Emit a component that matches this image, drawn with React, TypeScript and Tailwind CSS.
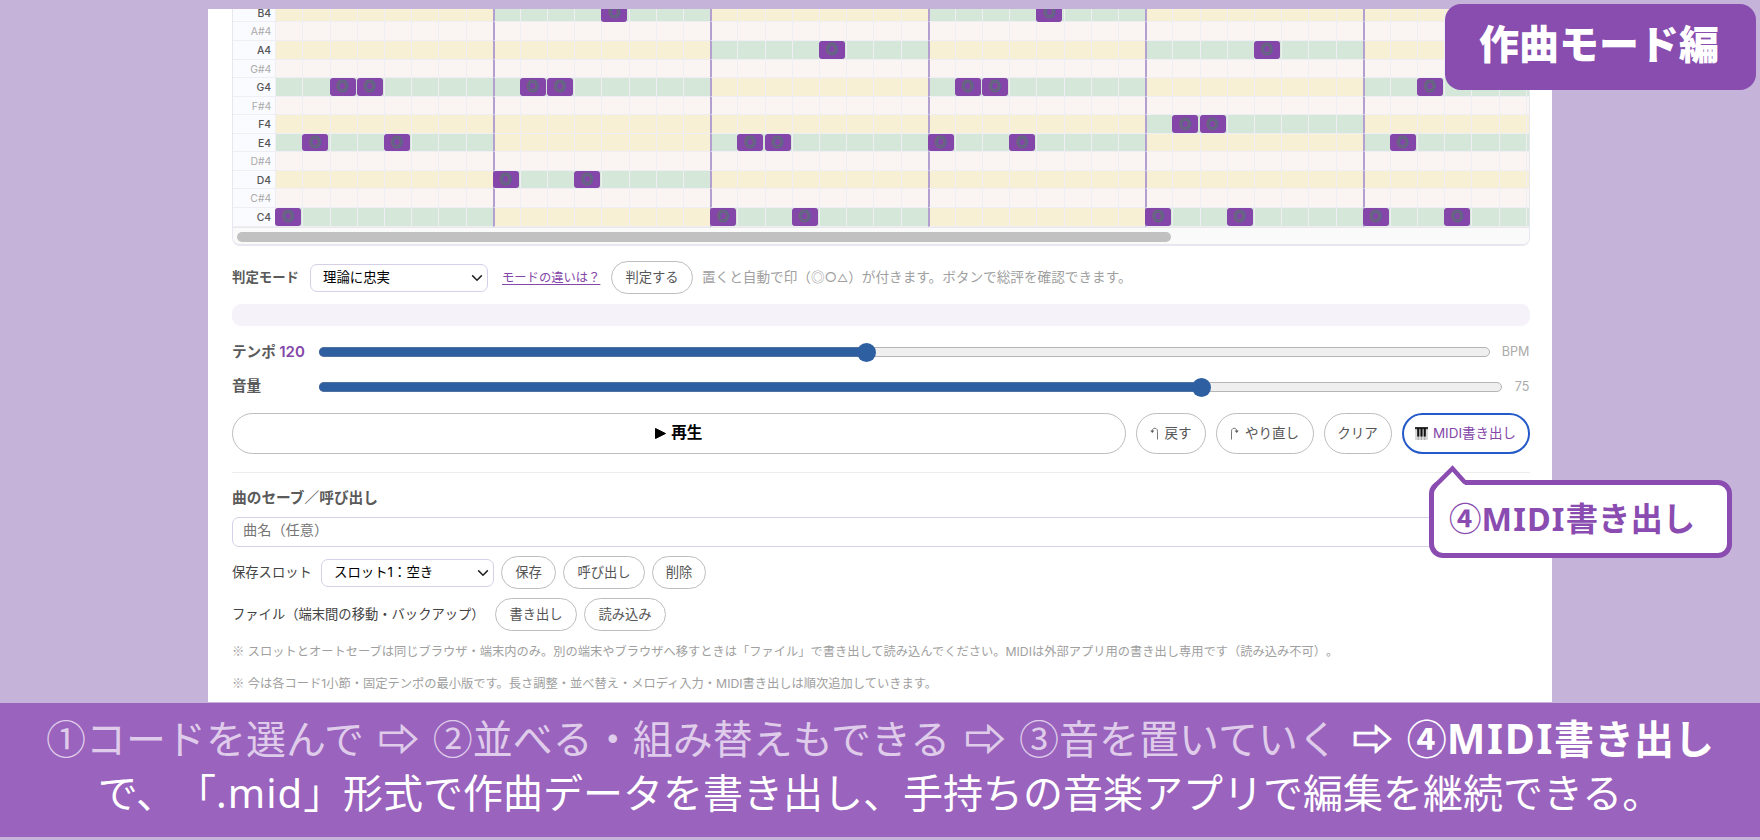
import React from "react";

type Row = { name: string; sharp?: boolean; green: number[]; notes: number[] };

const ROWS: Row[] = [
  { name: "B4", green: [1, 3], notes: [12, 28] },
  { name: "A#4", sharp: true, green: [], notes: [] },
  { name: "A4", green: [2, 4], notes: [20, 36] },
  { name: "G#4", sharp: true, green: [], notes: [] },
  { name: "G4", green: [0, 1, 3, 5], notes: [2, 3, 9, 10, 25, 26, 42] },
  { name: "F#4", sharp: true, green: [], notes: [] },
  { name: "F4", green: [4], notes: [33, 34] },
  { name: "E4", green: [0, 2, 3, 5], notes: [1, 4, 17, 18, 24, 27, 41] },
  { name: "D#4", sharp: true, green: [], notes: [] },
  { name: "D4", green: [1], notes: [8, 11] },
  { name: "C#4", sharp: true, green: [], notes: [] },
  { name: "C4", green: [0, 2, 4, 5], notes: [0, 16, 19, 32, 35, 40, 43] },
];

const COLS = Array.from({ length: 48 }, (_, i) => i);

function Cell({ row, col }: { row: Row; col: number }) {
  const bar = Math.floor(col / 8);
  const bg = row.sharp ? "bg-[#faf4f3]" : row.green.includes(bar) ? "bg-[#d4e7d8]" : "bg-[#f8f0d4]";
  const edge = col > 0 && col % 8 === 0 ? "border-l-2 border-l-[#b39fd0]" : "border-l border-l-[#eeeef4]";
  const noteShift = col > 0 && col % 8 === 0 ? "-ml-0.5" : "-ml-px";
  return (
    <div className={`flex h-full w-[27.2px] shrink-0 border-b border-b-[#eeeef4] ${edge} ${bg}`}>
      {row.notes.includes(col) && (
        <div
          className={`flex h-[17.6px] w-[26px] shrink-0 items-center justify-center rounded-[3px] bg-[#8446a8] pb-px font-['Noto_Sans_CJK_JP',sans-serif] text-[12px] leading-none text-[#5f6c7c] [-webkit-text-stroke:0.8px_#5f6c7c] ${noteShift}`}
        >
          ◎
        </div>
      )}
    </div>
  );
}

function PianoRoll() {
  return (
    <div className="mr-[22.5px] ml-[24px] h-[237px] overflow-hidden rounded-b-lg border-x border-b-2 border-[#e7e7ef]">
      <div className="flex h-[217.5px] flex-col justify-end overflow-hidden">
        {ROWS.map((row) => (
          <div key={row.name} className="flex h-[18.55px] shrink-0">
            <div
              className={`flex w-[42.2px] shrink-0 items-center justify-end border-b border-[#eeeef4] bg-[#fafbfe] pt-[2px] pr-[4px] text-[10.4px] ${
                row.sharp ? "text-[#aaaaaa]" : "font-medium text-[#555555]"
              }`}
            >
              {row.name}
            </div>
            {COLS.map((c) => (
              <Cell key={c} row={row} col={c} />
            ))}
          </div>
        ))}
      </div>
      <div className="h-[17.5px] border-t border-[#e8e8e8] bg-[#fafafa] pt-[4px] pl-[4px]">
        <div className="h-[10px] w-[934px] rounded-full bg-[#c1c1c1]" />
      </div>
    </div>
  );
}

function Pill({ className = "", children }: { className?: string; children: React.ReactNode }) {
  return (
    <button
      className={`flex shrink-0 items-center justify-center rounded-full border-[1.5px] border-[#bdbdbd] bg-white whitespace-nowrap text-[#555555] ${className}`}
    >
      {children}
    </button>
  );
}

function Select({ className = "", children }: { className?: string; children: React.ReactNode }) {
  return (
    <div
      className={`flex h-[28px] shrink-0 items-center justify-between rounded-[7px] border-[1.5px] border-[#d5cfe8] bg-white pr-1 pl-3 text-[13.4px] whitespace-nowrap text-black ${className}`}
    >
      <span>{children}</span>
      <svg width="12" height="8" viewBox="0 0 12 8" fill="none" stroke="#222" strokeWidth="1.5">
        <path d="M1.2 1.4 6 6.2l4.800-4.800" />
      </svg>
    </div>
  );
}

function Slider({ value, className = "" }: { value: number; className?: string }) {
  return (
    <div className={`flex h-[10px] items-center rounded-full border border-[#b5b5b5] bg-[#efefef] ${className}`}>
      <div className="-ml-px h-[10px] rounded-l-full border-y border-[#50729f] bg-[#2e5fa1]" style={{ width: value }} />
      <div className="-ml-[10px] size-[19px] shrink-0 rounded-full bg-[#2e5fa1]" />
    </div>
  );
}

function PianoIcon() {
  return (
    <svg width="13" height="13" viewBox="0 0 13 13">
      <rect width="13" height="13" rx="0.8" fill="#d9d9d9" />
      <path d="M0 0h13v2.200H0z" fill="#333" />
      <path d="M3.250 8v5M6.500 8v5M9.750 8v5" stroke="#888" strokeWidth="0.6" />
      <path d="M2.200 1h2.100v8.500H2.200zM5.450 1h2.100v8.500h-2.100zM8.700 1h2.100v8.500H8.700z" fill="#111" />
    </svg>
  );
}

function HookIcon({ flip = false }: { flip?: boolean }) {
  return (
    <svg width="9" height="13" viewBox="0 0 9 13" fill="none" className={flip ? "-scale-x-100" : ""}>
      <path d="M7.500 12.500V4.200C7.500 0.300 2.300 0.300 2.300 3.800" stroke="#777" strokeWidth="1" />
      <path d="M0.300 3.600h4L2.300 6z" fill="#555" />
    </svg>
  );
}

function Footnote({ className = "", children }: { className?: string; children: React.ReactNode }) {
  return (
    <p className={`h-5 text-[12.25px] leading-5 whitespace-nowrap text-[#a0a0a0] ${className}`}>
      <span className="font-['Noto_Sans_CJK_JP',sans-serif]">※</span> {children}
    </p>
  );
}

function Arrow() {
  return <span className="[-webkit-text-stroke:1.2px_currentColor]">⇨</span>;
}

export default function App() {
  return (
    <div className="relative flex h-[840px] w-[1760px] flex-col overflow-hidden bg-[#c5b3da] pt-[9px] font-[Inter,'Noto_Sans_CJK_JP',sans-serif] [text-spacing-trim:space-all]">
      <main className="ml-[208px] flex h-[693px] w-[1344px] shrink-0 flex-col bg-white">
        <PianoRoll />
        <div className="flex flex-1 flex-col pr-[22.5px] pl-[24px]">
          <div className="mt-[15px] flex h-[33px] items-center">
            <span className="w-[78px] text-[13.4px] font-bold text-[#5a5a5a]">判定モード</span>
            <Select className="w-[178px]">理論に忠実</Select>
            <a className="ml-[14px] w-[109px] pt-0.5 text-[12.3px] whitespace-nowrap text-[#8446a8] underline underline-offset-2">
              モードの違いは？
            </a>
            <Pill className="h-[33px] w-[82px] text-[13.3px]">判定する</Pill>
            <span className="ml-[9px] text-[13.63px] whitespace-nowrap text-[#a0a0a0]">
              置くと自動で印（◎○<span className="text-[11px]">△</span>）が付きます。ボタンで総評を確認できます。
            </span>
          </div>
          <div className="mt-[10px] h-[22px] rounded-[9px] bg-[#f5f2fa]" />
          <div className="mt-[16px] flex h-5 items-center text-[14.6px] font-bold text-[#5a5a5a]">
            <span className="w-[87px] whitespace-nowrap">
              テンポ <span className="text-[15px] font-semibold text-[#8446a8]">120</span>
            </span>
            <Slider value={548} className="w-[1171px]" />
            <span className="ml-auto text-[12.6px] font-normal text-[#aaaaaa]">BPM</span>
          </div>
          <div className="mt-[15px] flex h-5 items-center text-[14.6px] font-bold text-[#5a5a5a]">
            <span className="w-[87px]">音量</span>
            <Slider value={883} className="w-[1183px]" />
            <span className="ml-auto text-[12.6px] font-normal text-[#aaaaaa]">75</span>
          </div>
          <div className="mt-[15.5px] flex h-[41px] items-center gap-[10px] text-[13.5px]">
            <Pill className="h-full flex-1 gap-[5px] text-[15.6px] font-bold text-black!">
              <svg width="11" height="11" viewBox="0 0 11 11">
                <path d="M0.500 0.500 10.500 5.500 0.500 10.500z" fill="#000" stroke="#000" />
              </svg>
              再生
            </Pill>
            <Pill className="h-full w-[70px] gap-1.5">
              <HookIcon />
              戻す
            </Pill>
            <Pill className="h-full w-[98px] gap-1.5">
              <HookIcon flip />
              やり直し
            </Pill>
            <Pill className="h-full w-[68px]">クリア</Pill>
            <Pill className="h-full w-[128px] gap-[5px] border-2! border-[#2359c8]! text-[#8446a8]!">
              <PianoIcon />
              MIDI書き出し
            </Pill>
          </div>
          <div className="mt-[18px] h-px bg-[#ececec]" />
          <div className="mt-[16px] flex h-5 items-center text-[14.7px] font-bold text-[#5a5a5a]">
            曲のセーブ／呼び出し
          </div>
          <div className="mt-[8px] flex h-[30px] items-center rounded-[7px] border-[1.5px] border-[#d5cfe8] px-[10px] pb-[3px] text-[14.2px] text-[#757575]">
            曲名（任意）
          </div>
          <div className="mt-[9.5px] flex h-[33px] items-center gap-[7px] text-[13.3px] text-[#444444]">
            <span className="w-[82px] whitespace-nowrap">保存スロット</span>
            <Select className="w-[173px]">スロット1：空き</Select>
            <Pill className="h-[33px] w-[55px]">保存</Pill>
            <Pill className="h-[33px] w-[82px]">呼び出し</Pill>
            <Pill className="h-[33px] w-[54px]">削除</Pill>
          </div>
          <div className="mt-[9px] flex h-[33px] items-center gap-[7px] text-[13.3px] text-[#444444]">
            <span className="w-[256px] whitespace-nowrap">ファイル（端末間の移動・バックアップ）</span>
            <Pill className="h-[33px] w-[82px]">書き出し</Pill>
            <Pill className="h-[33px] w-[82px]">読み込み</Pill>
          </div>
          <Footnote className="mt-[9.5px]">
            スロットとオートセーブは同じブラウザ・端末内のみ。別の端末やブラウザへ移すときは「ファイル」で書き出して読み込んでください。MIDIは外部アプリ用の書き出し専用です（読み込み不可）。
          </Footnote>
          <Footnote className="mt-[12px]">
            今は各コード1小節・固定テンポの最小版です。長さ調整・並べ替え・メロディ入力・MIDI書き出しは順次追加していきます。
          </Footnote>
        </div>
      </main>

      <footer className="mt-px h-[133.5px] bg-[#9a63bd] pt-[9px] text-center font-['Noto_Sans','Noto_Sans_CJK_JP',sans-serif] text-[40px] leading-[54px] whitespace-nowrap text-white">
        <div className="[word-spacing:4px]">
          <span className="text-[#dfcbea]">
            ①コードを選んで <Arrow /> ②並べる・組み替えもできる <Arrow /> ③音を置いていく{" "}
          </span>
          <span className="font-bold">
            <Arrow /> ④<span className="text-[41px] leading-none tracking-[1.7px]">MIDI</span>書き出し
          </span>
        </div>
        <div>
          で、「<span className="tracking-[1px]">.mid</span>」形式で作曲データを書き出し、手持ちの音楽アプリで編集を継続できる。
        </div>
      </footer>

      <div className="absolute top-[4px] left-[1445px] flex h-[86px] w-[311px] items-center justify-center rounded-[16px] bg-[#884dae] pr-[3px] pb-[11px] font-['Noto_Sans_CJK_JP',sans-serif] text-[40px] font-black text-white">
        作曲モード編
      </div>

      <div className="absolute top-[480px] left-[1429px] flex h-[78px] w-[303px] items-center rounded-[14px] border-[5px] border-[#8a4cb0] bg-white pb-[2px] pl-[15px] font-['Noto_Sans','Noto_Sans_CJK_JP',sans-serif] text-[32.4px] font-bold whitespace-nowrap text-[#8a4cb0]">
        ④<span className="tracking-[1.2px]">MIDI</span>書き出し
        <svg className="absolute -top-[21px] left-0" width="40" height="24" viewBox="0 0 40 24">
          <path d="M3.500 21 18.500 5 31 21v3H3z" fill="#fff" />
          <path d="M1 22 18.500 4.500 31 18.500" fill="none" stroke="#8a4cb0" strokeWidth="4.500" />
        </svg>
      </div>
    </div>
  );
}
